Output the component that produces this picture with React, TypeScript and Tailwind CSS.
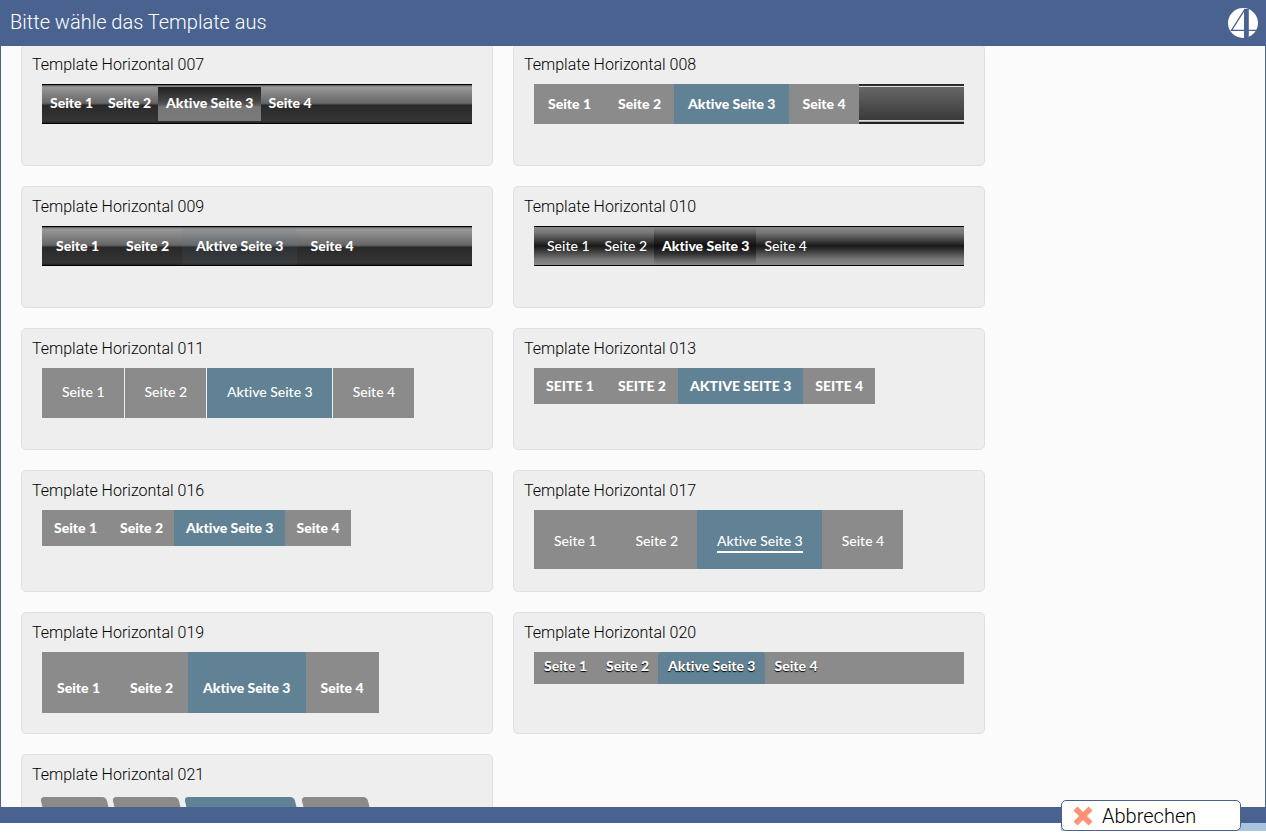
import clsx from "clsx";

type Template = {
  id: string;
  bar: string;
  item: string;
  active: string;
  label?: string;
  activeLabel?: string;
};

const plain = "bg-[#8b8b8b]";
const blue = "bg-[#618194]";

const glossy =
  "flex h-10 border-y border-black bg-[linear-gradient(#555_0,#999_2px,#666_18px,#555_19px,#292929_20px,#353535_36px,#222_100%)]";

const templates: Template[] = [
  {
    id: "007",
    bar: `${glossy} py-[2px]`,
    item: "pr-[7px] pb-[2px] pl-2 font-black",
    active: "bg-[linear-gradient(#222,#444_40%,#555_50%,#777_60%,#7a7a7a)]",
  },
  {
    id: "008",
    bar: "flex h-10 bg-[linear-gradient(#222_0,#333_2px,#ddd_2px,#ddd_3px,#666_3px,#3a3a3a_36px,#ddd_36px,#ddd_37px,#888_38px,#222_38px)]",
    item: `pr-[13px] pl-[14px] font-black ${plain}`,
    active: blue,
  },
  {
    id: "009",
    bar: glossy,
    item: "pr-[13px] pl-[14px] font-black",
    active: "bg-[#618194]/10",
  },
  {
    id: "010",
    bar: "flex h-10 border-y border-black pl-[5px] bg-[linear-gradient(#888,#777_15%,#181818_50%,#777_85%,#8a8a8a)]",
    item: "pr-[7px] pl-2 font-medium",
    active: "bg-[linear-gradient(transparent,#0006_30%,#0006_70%,transparent)] font-black!",
  },
  {
    id: "011",
    bar: "flex h-[50px] gap-px",
    item: `pr-[19px] pb-[2px] pl-5 font-medium ${plain}`,
    active: blue,
  },
  {
    id: "013",
    bar: "flex h-9",
    item: `px-3 font-black uppercase ${plain}`,
    active: blue,
  },
  {
    id: "016",
    bar: "flex h-9",
    item: `pr-[11px] pl-3 font-black ${plain}`,
    active: blue,
  },
  {
    id: "017",
    bar: "flex h-[59px]",
    item: `pt-1 pr-[19px] pl-5 font-medium ${plain}`,
    active: blue,
    label: "border-b-2 border-transparent",
    activeLabel: "border-white",
  },
  {
    id: "019",
    bar: "flex h-[61px]",
    item: `px-[15px] pt-[10px] font-black ${plain}`,
    active: blue,
  },
  {
    id: "020",
    bar: `flex h-8 ${plain}`,
    item: "pr-[9px] pl-[10px] pb-1 font-black [text-shadow:0_1px_1px_#000]",
    active: `rounded-t-sm ${blue}`,
  },
  {
    id: "021",
    bar: "flex h-9 gap-[6px] pt-[3px]",
    item: `origin-[0_8px] skew-x-[14deg] rounded-t-sm pr-[11px] pl-3 font-black ${plain}`,
    active: blue,
  },
];

const pages = ["Seite 1", "Seite 2", "Aktive Seite 3", "Seite 4"];

const TemplateCard = ({ template }: { template: Template }) => (
  <article className="h-[122px] w-[472px] rounded-[5px] border border-[#e0e0e0] bg-[#eee] px-[10px] pt-[10px]">
    <h2 className="text-base leading-5 font-light text-black">Template Horizontal {template.id}</h2>
    <nav className="mx-[10px] mt-[9px] flex" aria-label={`Template Horizontal ${template.id}`}>
      <div
        className={clsx(
          "flex-1 font-[Lato,sans-serif] text-sm leading-5 text-white [font-variant-ligatures:none]",
          template.bar
        )}
      >
        {pages.map((page, i) => (
          <a
            key={page}
            href="#"
            className={clsx("flex items-center whitespace-nowrap", template.item, i === 2 && template.active)}
          >
            <span className={clsx(template.label, i === 2 && template.activeLabel)}>{page}</span>
          </a>
        ))}
      </div>
    </nav>
  </article>
);

const Logo = () => (
  <svg viewBox="0 0 30 30" className="size-[30px]" aria-hidden="true">
    <circle cx="15" cy="15" r="15" fill="#fff" />
    <path d="M16 1h4.800v29H16z" fill="#49628f" />
    <path d="M17 1.200 3.500 22.400H29" fill="none" stroke="#49628f" strokeWidth="1.3" />
  </svg>
);

const App = () => (
  <div className="flex h-screen flex-col bg-white font-[Roboto,sans-serif]">
    <header className="flex h-[46px] shrink-0 items-center justify-between bg-[#49628f] pr-2 pl-[10px]">
      <h1 className="pb-[2px] text-xl font-light text-white">Bitte wähle das Template aus</h1>
      <Logo />
    </header>

    <main className="min-h-0 flex-1 overflow-hidden border-x border-[#49628f] bg-[#fbfbfb] px-5">
      <div className="-mt-[2px] flex max-w-[984px] flex-wrap gap-5">
        {templates.map((template) => (
          <TemplateCard key={template.id} template={template} />
        ))}
      </div>
    </main>

    <footer className="relative h-[31px] shrink-0">
      <div className="h-4 bg-[#49628f]" />
      <div className="ml-auto h-2 w-[205px] bg-[#a9c4de]" />
      <button
        type="button"
        className="absolute -top-[7px] right-[25px] flex h-[31px] w-[180px] items-center gap-[9px] rounded-[5px] border border-[#49628f] bg-white pl-[11px] text-xl font-light text-black"
      >
        <svg viewBox="0 0 20 20" className="size-5" aria-hidden="true">
          <path
            d="M4.500 .5 10 6l5.500-5.500 4 4L14 10l5.500 5.500-4 4L10 14l-5.500 5.500-4-4L6 10 .5 4.500z"
            fill="#ff9175"
          />
        </svg>
        Abbrechen
      </button>
    </footer>
  </div>
);

export default App;
